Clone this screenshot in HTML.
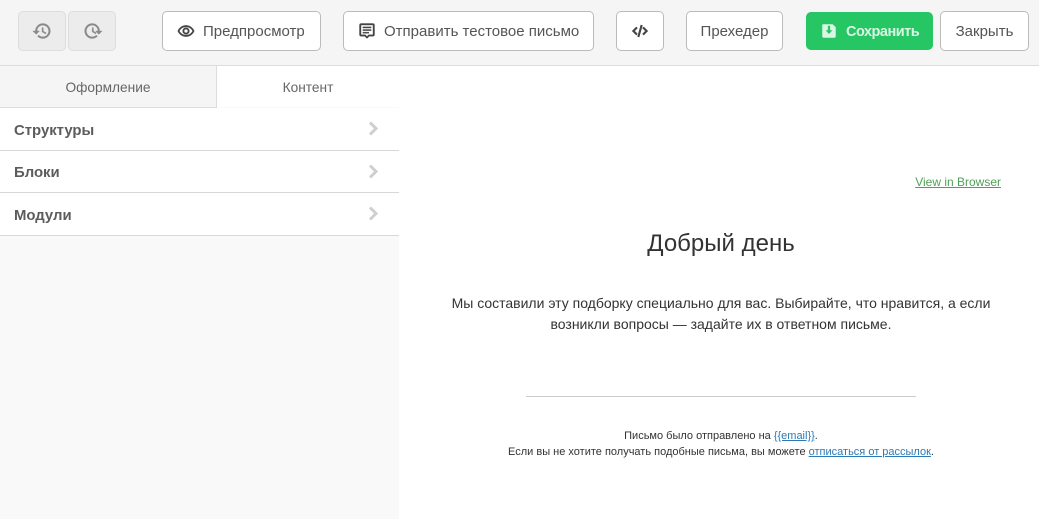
<!DOCTYPE html>
<html lang="ru">
<head>
<meta charset="utf-8">
<title>Редактор</title>
<style>
html,body{margin:0;padding:0;background:#fff;}
body{width:1039px;height:519px;overflow:hidden;position:relative;font-family:"Liberation Sans",Arial,sans-serif;color:#333;}
.abs{position:absolute;}
#hdr{left:0;top:0;width:1039px;height:65px;background:#f5f5f5;border-bottom:1px solid #ddd;}
.btn{position:absolute;top:11px;height:38px;background:#fff;border:1px solid #bbb;border-radius:5px;font-size:15px;line-height:39px;color:#555;text-align:center;white-space:nowrap;}
.btn svg{position:absolute;}
.dis{background:#ececec;border-color:#ddd;}
.lbl{position:absolute;top:0;line-height:39px;}
.tab{position:absolute;top:66px;height:41px;line-height:43px;font-size:13.7px;text-align:center;color:#666;}
.row{position:absolute;left:0;width:399px;height:42px;background:#fff;border-bottom:1px solid #d8d8d8;}
.row span{position:absolute;left:14px;top:0;line-height:46px;font-size:14.9px;font-weight:bold;color:#5c5c5c;}
.row svg{position:absolute;left:368px;top:13px;}
.t{position:absolute;text-align:center;white-space:nowrap;}
</style>
</head>
<body>
<div class="abs" id="hdr"></div>

<div class="btn dis" style="left:18px;width:46px;">
<svg style="left:13px;top:9px" width="20" height="20" viewBox="0 0 24 24"><path fill="#8a8a8a" stroke="#8a8a8a" stroke-width=".5" d="M13 3a9 9 0 0 0-9 9H1l3.900 3.900.1.1L9 12H6a7 7 0 1 1 2.050 4.950l-1.420 1.420A9 9 0 1 0 13 3zm-1 5v5l4.250 2.520.77-1.280-3.520-2.090V8z"/></svg>
</div>
<div class="btn dis" style="left:68px;width:46px;">
<svg style="left:14px;top:9px" width="20" height="20" viewBox="0 0 24 24"><path fill="#8a8a8a" stroke="#8a8a8a" stroke-width=".5" transform="matrix(-1 0 0 1 24 0)" d="M13 3a9 9 0 0 0-9 9H1l3.900 3.900.1.1L9 12H6a7 7 0 1 1 2.050 4.950l-1.420 1.420A9 9 0 1 0 13 3z"/><path fill="#8a8a8a" stroke="#8a8a8a" stroke-width=".5" d="M11 8v5l4.250 2.520.77-1.280-3.520-2.090V8z"/></svg>
</div>

<div class="btn" style="left:162px;width:157px;">
<svg style="left:14px;top:10px" width="18" height="18" viewBox="0 0 24 24"><path fill="#444" stroke="#444" stroke-width=".5" d="M12 4.500C7 4.500 2.730 7.610 1 12c1.730 4.390 6 7.500 11 7.500s9.270-3.110 11-7.500c-1.730-4.390-6-7.500-11-7.500zm0 13c-3.790 0-7.170-2.130-8.820-5.500C4.830 8.630 8.210 6.500 12 6.500s7.170 2.130 8.820 5.500c-1.650 3.370-5.030 5.500-8.820 5.500zm0-10a4.500 4.500 0 1 0 0 9 4.500 4.500 0 0 0 0-9zm0 7a2.500 2.500 0 1 1 0-5 2.500 2.500 0 0 1 0 5z"/></svg>
<span class="lbl" style="left:40px;">Предпросмотр</span>
</div>

<div class="btn" style="left:343px;width:249px;">
<svg style="left:14px;top:10px" width="18" height="18" viewBox="0 0 24 24"><path fill="#444" stroke="#444" stroke-width=".5" d="M20 2H4a2 2 0 0 0-2 2v13a2 2 0 0 0 2 2h5l3 3 3-3h5a2 2 0 0 0 2-2V4a2 2 0 0 0-2-2zm0 15h-5.800L12 19.200 9.800 17H4V4h16v13zM6.500 6.500h11v1.500h-11zm0 3.500h11v1.500h-11zm0 3.500h8v1.500h-8z"/></svg>
<span class="lbl" style="left:40px;">Отправить тестовое письмо</span>
</div>

<div class="btn" style="left:616px;width:46px;">
<svg style="left:15px;top:11px" width="16" height="16" viewBox="0 0 24 24"><path fill="none" stroke="#444" stroke-width="3.200" d="M7.500 6.500 2 12l5.500 5.500M16.500 6.500 22 12l-5.500 5.500M14.500 3l-5 18"/></svg>
</div>

<div class="btn" style="left:686px;width:95px;">Прехедер</div>

<div class="btn" style="left:806px;width:127px;height:38px;top:12px;background:#25c663;border:0;color:#d9f7e4;font-weight:bold;">
<svg style="left:14px;top:10px" width="18" height="18" viewBox="0 0 24 24"><path fill="#d9f7e4" d="M4 3h13l4 4v12a2 2 0 0 1-2 2H5a2 2 0 0 1-2-2V4a1 1 0 0 1 1-1zm6.500 2v6H7.500l4.500 5 4.500-5h-3V5z"/></svg>
<span class="lbl" style="left:40px;font-size:14.5px;letter-spacing:-.5px;line-height:40px;">Сохранить</span>
</div>

<div class="btn" style="left:940px;width:87px;">Закрыть</div>

<div class="abs" style="left:0;top:66px;width:399px;height:453px;background:#f9f9f9;"></div>
<div class="tab" style="left:0;width:216px;background:#f5f5f5;border-right:1px solid #ddd;border-bottom:1px solid #ddd;">Оформление</div>
<div class="tab" style="left:217px;width:182px;background:#fff;">Контент</div>

<div class="row" style="top:108px;"><span>Структуры</span><svg width="11" height="15" viewBox="0 0 11 15"><path d="M2 1.500 8 7.500 2 13.500" fill="none" stroke="#cfcfcf" stroke-width="3"/></svg></div>
<div class="row" style="top:151px;height:41px;"><span style="line-height:45px;">Блоки</span><svg style="top:13px" width="11" height="15" viewBox="0 0 11 15"><path d="M2 1.500 8 7.500 2 13.500" fill="none" stroke="#cfcfcf" stroke-width="3"/></svg></div>
<div class="row" style="top:193px;"><span>Модули</span><svg style="top:13px" width="11" height="15" viewBox="0 0 11 15"><path d="M2 1.500 8 7.500 2 13.500" fill="none" stroke="#cfcfcf" stroke-width="3"/></svg></div>

<a class="t" style="right:38px;top:175px;font-size:12px;line-height:14px;color:#4ea257;text-decoration:underline;">View in Browser</a>

<div class="t" style="left:401px;width:640px;top:230px;font-size:24px;line-height:28px;color:#333;">Добрый день</div>

<div class="t" style="left:401px;width:640px;top:293px;font-size:14px;line-height:21px;color:#333;">Мы составили эту подборку специально для вас. Выбирайте, что нравится, а если<br>возникли вопросы — задайте их в ответном письме.</div>

<div class="abs" style="left:526px;top:396px;width:390px;height:1px;background:#ccc;"></div>

<div class="t" style="left:401px;width:640px;top:428px;font-size:11px;line-height:16px;color:#333;">Письмо было отправлено на <span style="color:#2a7ab8;text-decoration:underline;">{{email}}</span>.<br>Если вы не хотите получать подобные письма, вы можете <span style="color:#2a7ab8;text-decoration:underline;">отписаться от рассылок</span>.</div>
</body>
</html>
